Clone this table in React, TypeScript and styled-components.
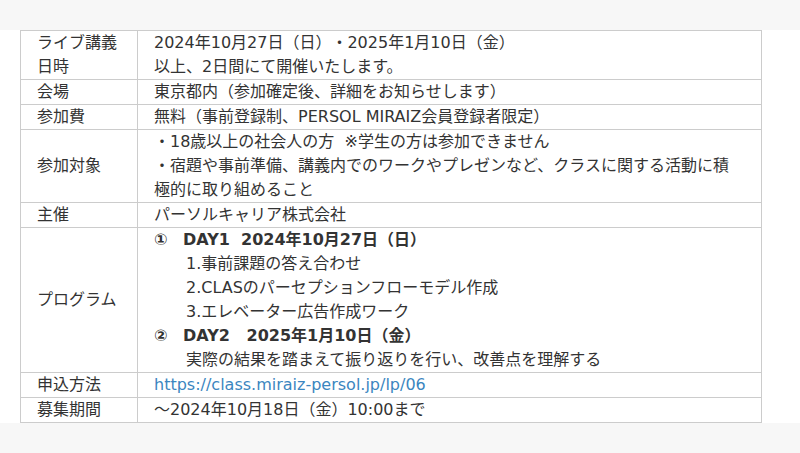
import React from "react";
import styled, { createGlobalStyle } from "styled-components";

const GlobalStyle = createGlobalStyle`
  html, body {
    margin: 0;
    padding: 0;
    background: #ffffff;
  }
  body {
    font-family: "DejaVu Sans", "Noto Sans CJK JP", sans-serif;
    font-size: 16px;
    line-height: 24px;
    color: #333333;
    text-spacing-trim: space-all;
  }
`;

const Page = styled.div`
  display: flex;
  flex-direction: column;
  width: 800px;
  height: 453px;
  overflow: hidden;
`;

const Band = styled.div<{ $grow?: boolean }>`
  background: #f7f7f7;
  height: 30px;
  flex: ${(p) => (p.$grow ? "1 1 auto" : "0 0 auto")};
`;

const Main = styled.div`
  padding-left: 20px;
  background: #ffffff;
`;

const InfoTable = styled.div`
  display: grid;
  grid-template-columns: 117px 624px;
  width: 742px;
  border-top: 1px solid #cccccc;
  border-left: 1px solid #cccccc;
  box-sizing: border-box;
`;

const Cell = styled.div`
  box-sizing: border-box;
  border-right: 1px solid #cccccc;
  border-bottom: 1px solid #cccccc;
  padding: 0 16px;
`;

const Label = styled(Cell)`
  display: flex;
  align-items: center;
`;

const Value = styled(Cell)`
  display: flex;
  flex-direction: column;
`;

const Line = styled.div<{ $indent?: boolean }>`
  padding-left: ${(p) => (p.$indent ? "32px" : "0")};
  white-space: pre-wrap;
`;

const DayHead = styled.div`
  display: flex;
  font-weight: bold;
  white-space: pre;
`;

const Mark = styled.span`
  width: 29px;
  flex: 0 0 auto;
`;

const Link = styled.a`
  color: #3b86c0;
  text-decoration: none;
`;

type Row = { label: string; value: React.ReactNode };

const rows: Row[] = [
  {
    label: "ライブ講義日時",
    value: (
      <>
        <Line>2024年10月27日（日）・2025年1月10日（金）</Line>
        <Line>以上、2日間にて開催いたします。</Line>
      </>
    ),
  },
  { label: "会場", value: <Line>東京都内（参加確定後、詳細をお知らせします）</Line> },
  { label: "参加費", value: <Line>無料（事前登録制、PERSOL MIRAIZ会員登録者限定）</Line> },
  {
    label: "参加対象",
    value: (
      <>
        <Line>{"・18歳以上の社会人の方  ※学生の方は参加できません"}</Line>
        <Line>
          ・宿題や事前準備、講義内でのワークやプレゼンなど、クラスに関する活動に積
          <br />
          極的に取り組めること
        </Line>
      </>
    ),
  },
  { label: "主催", value: <Line>パーソルキャリア株式会社</Line> },
  {
    label: "プログラム",
    value: (
      <>
        <DayHead>
          <Mark>①</Mark>
          <span>{"DAY1  2024年10月27日（日）"}</span>
        </DayHead>
        <Line $indent>1.事前課題の答え合わせ</Line>
        <Line $indent>2.CLASのパーセプションフローモデル作成</Line>
        <Line $indent>3.エレベーター広告作成ワーク</Line>
        <DayHead>
          <Mark>②</Mark>
          <span>{"DAY2   2025年1月10日（金）"}</span>
        </DayHead>
        <Line $indent>実際の結果を踏まえて振り返りを行い、改善点を理解する</Line>
      </>
    ),
  },
  {
    label: "申込方法",
    value: (
      <Line>
        <Link href="#">https://class.miraiz-persol.jp/lp/06</Link>
      </Line>
    ),
  },
  { label: "募集期間", value: <Line>〜2024年10月18日（金）10:00まで</Line> },
];

export default function App() {
  return (
    <>
      <GlobalStyle />
      <Page>
        <Band />
        <Main>
          <InfoTable>
            {rows.map((r) => (
              <React.Fragment key={r.label}>
                <Label>{r.label}</Label>
                <Value>{r.value}</Value>
              </React.Fragment>
            ))}
          </InfoTable>
        </Main>
        <Band $grow />
      </Page>
    </>
  );
}
